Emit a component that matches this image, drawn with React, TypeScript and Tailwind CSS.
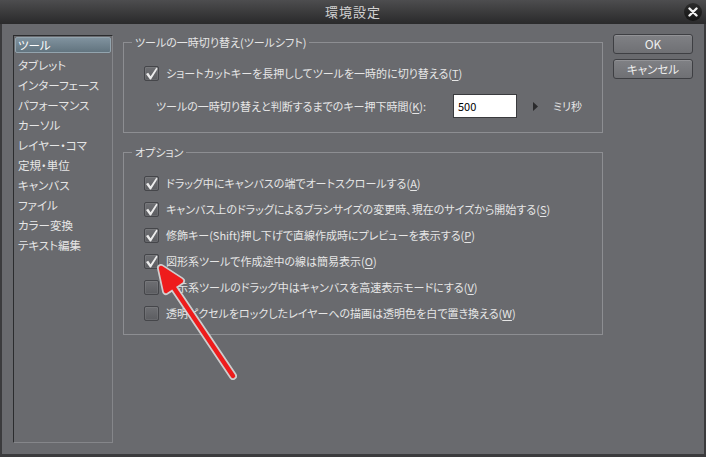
import React from 'react'

const sideItems = [
    'ツール',
    'タブレット',
    'インターフェース',
    'パフォーマンス',
    'カーソル',
    'レイヤー・コマ',
    '定規・単位',
    'キャンバス',
    'ファイル',
    'カラー変換',
    'テキスト編集',
]

const options: { label: string; key: string; checked: boolean }[] = [
    { label: 'ドラッグ中にキャンバスの端でオートスクロールする', key: 'A', checked: true },
    { label: 'キャンバス上のドラッグによるブラシサイズの変更時、現在のサイズから開始する', key: 'S', checked: true },
    { label: '修飾キー(Shift)押し下げで直線作成時にプレビューを表示する', key: 'P', checked: true },
    { label: '図形系ツールで作成途中の線は簡易表示', key: 'O', checked: true },
    { label: '表示系ツールのドラッグ中はキャンバスを高速表示モードにする', key: 'V', checked: false },
    { label: '透明ピクセルをロックしたレイヤーへの描画は透明色を白で置き換える', key: 'W', checked: false },
]

function CheckBox({ checked }: { checked: boolean }) {
    return (
        <span className="w-[15px] h-[15px] shrink-0 rounded-[2px] border border-[#45464a] bg-gradient-to-b from-[#6e6f73] to-[#5c5d61] shadow-[inset_0_0_0_1px_rgba(255,255,255,0.07)] flex items-center justify-center">
            {checked && (
                <svg width="13" height="13" viewBox="0 0 13 13">
                    <path d="M1 7 L3.2 5.8 L5.6 9.2 L11.4 0.6 L12.6 1.8 L6 12.4 L5 12.4 Z" fill="#ececec" />
                </svg>
            )}
        </span>
    )
}

function Mnemonic({ k }: { k: string }) {
    return (
        <span>
            (<u className="underline-offset-2">{k}</u>)
        </span>
    )
}

export default function App() {
    return (
        <div className="relative w-[706px] h-[457px] overflow-hidden flex flex-col bg-[#3b3b3d] font-['Noto_Sans_CJK_JP',sans-serif] text-[11px] text-[#e6e6e6] [font-feature-settings:'palt']">
            {/* title bar */}
            <div className="h-[24px] shrink-0 relative flex items-center justify-center bg-gradient-to-b from-[#4d4d4f] to-[#2a2a2b]">
                <span className="text-[13px] text-[#d2d2d2] tracking-[1px]">環境設定</span>
                <span className="absolute right-[4px] top-[3px] w-[18px] h-[18px] rounded-full bg-gradient-to-b from-[#2c2c2c] to-[#151515] flex items-center justify-center">
                    <svg width="10" height="10" viewBox="0 0 10 10">
                        <path d="M1.5 1.5 L8.5 8.5 M8.5 1.5 L1.5 8.5" stroke="#f2f2f2" strokeWidth="2.4" strokeLinecap="round" />
                    </svg>
                </span>
            </div>

            {/* body */}
            <div className="flex-1 mx-[2px] mb-[3px] bg-[#696a6e] flex pt-[11px] pl-[11px]">
                {/* category list */}
                <div className="w-[100px] h-[408px] border-t border-l border-[#2b2c2e] border-r border-b border-r-[#85868a] border-b-[#85868a] px-[2px] pt-[1px] text-[11.5px]">
                    {sideItems.map((item, i) => (
                        <div
                            key={item}
                            className={
                                i === 0
                                    ? 'h-[16px] mb-[4px] pl-[2px] leading-[15px] rounded-[2px] border border-[#93a4ae] bg-gradient-to-b from-[#80929e] to-[#62747f] text-white -ml-[1px] -mr-[1px]'
                                    : 'h-[16px] mb-[4px] pl-[2px] leading-[16px]'
                            }
                        >
                            {item}
                        </div>
                    ))}
                </div>

                {/* settings */}
                <div className="w-[480px] ml-[10px] flex flex-col">
                    <fieldset className="h-[98px] border border-[#8d8e92] px-0">
                        <legend className="ml-[8px] px-[3px] leading-[14px]">ツールの一時切り替え(ツールシフト)</legend>
                        <div className="mt-[16px] ml-[20px] flex items-center gap-[7px] h-[16px]">
                            <CheckBox checked />
                            <span>
                                ショートカットキーを長押ししてツールを一時的に切り替える<Mnemonic k="T" />
                            </span>
                        </div>
                        <div className="mt-[13px] ml-[32px] flex items-center h-[24px]">
                            <span className="w-[297px]">
                                ツールの一時切り替えと判断するまでのキー押下時間<Mnemonic k="K" />:
                            </span>
                            <div className="w-[64px] h-[24px] bg-white border border-[#3a3b3e] text-black pl-[4px] leading-[22px]">500</div>
                            <svg className="ml-[16px]" width="5" height="9" viewBox="0 0 5 9">
                                <path d="M0 0 L5 4.5 L0 9 Z" fill="#2a2a2c" />
                            </svg>
                            <span className="ml-[15px]">ミリ秒</span>
                        </div>
                    </fieldset>

                    <fieldset className="mt-[12px] h-[190px] border border-[#8d8e92] px-0">
                        <legend className="ml-[8px] px-[3px] leading-[14px]">オプション</legend>
                        <div className="mt-[11px] ml-[20px] flex flex-col">
                            {options.map((o) => (
                                <div key={o.key} className="h-[26px] flex items-center gap-[7px]">
                                    <CheckBox checked={o.checked} />
                                    <span>
                                        {o.label}
                                        <Mnemonic k={o.key} />
                                    </span>
                                </div>
                            ))}
                        </div>
                    </fieldset>
                </div>

                {/* buttons */}
                <div className="ml-[10px] -mt-[1px] flex flex-col gap-[5px]">
                    <button className="w-[80px] h-[20px] rounded-[3px] border border-[#3e3f43] bg-gradient-to-b from-[#808185] to-[#6f7074] shadow-[inset_0_1px_0_rgba(255,255,255,0.15)] text-[12px] leading-[18px] text-[#eeeeee]">
                        OK
                    </button>
                    <button className="w-[80px] h-[20px] rounded-[3px] border border-[#3e3f43] bg-gradient-to-b from-[#808185] to-[#6f7074] shadow-[inset_0_1px_0_rgba(255,255,255,0.15)] text-[11.5px] leading-[18px] text-[#eeeeee]">
                        キャンセル
                    </button>
                </div>
            </div>

            {/* annotation arrow */}
            <svg className="absolute inset-0 pointer-events-none" width="706" height="457" viewBox="0 0 706 457">
                <g stroke="#d9d9d9" strokeWidth="8" strokeLinecap="round" strokeLinejoin="round" fill="#d9d9d9" opacity="0.9">
                    <line x1="172" y1="285" x2="233" y2="376" />
                    <path d="M161 268 L181 281 L166 291 Z" />
                </g>
                <g stroke="#ee1c1c" strokeWidth="4.5" strokeLinecap="round" strokeLinejoin="round" fill="#ee1c1c">
                    <line x1="172" y1="285" x2="233" y2="376" />
                    <path d="M161 268 L181 281 L166 291 Z" />
                </g>
            </svg>
        </div>
    )
}
